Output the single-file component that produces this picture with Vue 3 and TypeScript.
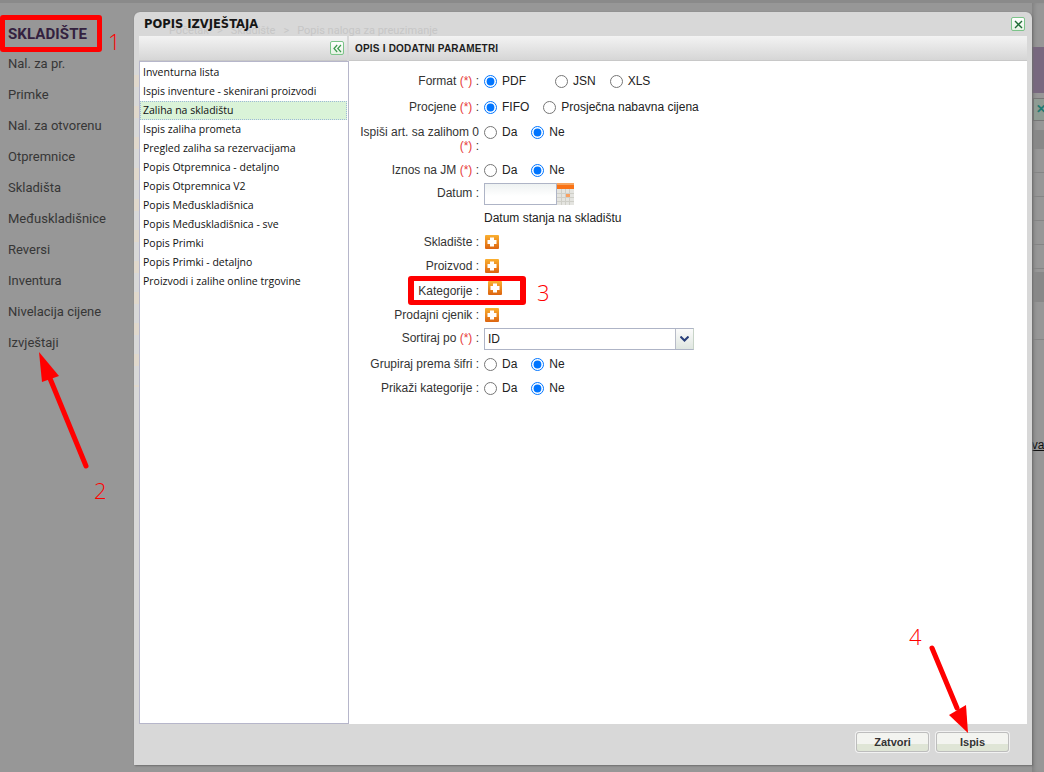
<script setup lang="ts">
import { ref } from 'vue'

type Row = {
  label: string
  req?: boolean
  kind: 'radio' | 'plus' | 'date' | 'help' | 'select'
  name?: string
  options?: string[]
  picked?: string
  h: number
}

const navItems = [
  'Nal. za pr.',
  'Primke',
  'Nal. za otvorenu',
  'Otpremnice',
  'Skladišta',
  'Međuskladišnice',
  'Reversi',
  'Inventura',
  'Nivelacija cijene',
  'Izvještaji',
]

const reports = [
  'Inventurna lista',
  'Ispis inventure - skenirani proizvodi',
  'Zaliha na skladištu',
  'Ispis zaliha prometa',
  'Pregled zaliha sa rezervacijama',
  'Popis Otpremnica - detaljno',
  'Popis Otpremnica V2',
  'Popis Međuskladišnica',
  'Popis Međuskladišnica - sve',
  'Popis Primki',
  'Popis Primki - detaljno',
  'Proizvodi i zalihe online trgovine',
]

const selected = ref('Zaliha na skladištu')

const daNe = ['Da', 'Ne']

const rows: Row[] = [
  { label: 'Format', req: true, kind: 'radio', name: 'format', options: ['PDF', 'JSN', 'XLS'], picked: 'PDF', h: 26 },
  { label: 'Procjene', req: true, kind: 'radio', name: 'proc', options: ['FIFO', 'Prosječna nabavna cijena'], picked: 'FIFO', h: 25 },
  { label: 'Ispiši art. sa zalihom 0', req: true, kind: 'radio', name: 'nula', options: daNe, picked: 'Ne', h: 38 },
  { label: 'Iznos na JM', req: true, kind: 'radio', name: 'jm', options: daNe, picked: 'Ne', h: 23 },
  { label: 'Datum', kind: 'date', h: 26 },
  { label: '', kind: 'help', h: 23 },
  { label: 'Skladište', kind: 'plus', h: 24 },
  { label: 'Proizvod', kind: 'plus', h: 25 },
  { label: 'Kategorije', kind: 'plus', h: 24 },
  { label: 'Prodajni cjenik', kind: 'plus', h: 23 },
  { label: 'Sortiraj po', req: true, kind: 'select', h: 26 },
  { label: 'Grupiraj prema šifri', kind: 'radio', name: 'grup', options: daNe, picked: 'Ne', h: 24 },
  { label: 'Prikaži kategorije', kind: 'radio', name: 'kat', options: daNe, picked: 'Ne', h: 24 },
]
</script>

<template>
  <div class="page">
    <nav class="sidebar">
      <h2 class="side-title">SKLADIŠTE</h2>
      <a v-for="item in navItems" :key="item" class="nav-link">{{ item }}</a>
    </nav>

    <!-- what is left visible of the page behind the dialog -->
    <div class="behind">
      <div class="behind-band"></div>
      <div class="behind-tool"><span>✕</span></div>
      <div class="behind-head"></div>
      <div class="behind-row"></div>
      <div class="behind-row"></div>
      <div class="behind-row"></div>
      <div class="behind-row"></div>
      <div class="behind-row"></div>
      <div class="behind-head tall"></div>
      <div class="behind-row last"></div>
      <a class="behind-link">ava</a>
    </div>

    <section class="dialog">
      <span class="crumbs">
        <span>Početak</span><span>&gt;</span><span>Skladište</span><span>&gt;</span><span>Popis naloga za preuzimanje</span>
      </span>
      <header class="dialog-title">
        <h3>POPIS IZVJEŠTAJA</h3>
        <button class="icon-btn" aria-label="Zatvori">
          <svg width="9" height="9" viewBox="0 0 9 9"><path d="M1 1l7 7M8 1L1 8" stroke="#1f6b35" stroke-width="1.4" /></svg>
        </button>
      </header>

      <div class="panels">
        <aside class="left-panel">
          <div class="panel-head left">
            <button class="icon-btn" aria-label="Sakrij">
              <svg width="9" height="9" viewBox="0 0 9 9"><path d="M4.2 1L1 4.5 4.2 8M8 1L4.8 4.5 8 8" fill="none" stroke="#3c9a4e" stroke-width="1.2" /></svg>
            </button>
          </div>
          <ul class="report-list">
            <li
              v-for="r in reports"
              :key="r"
              class="report"
              :class="{ active: r === selected }"
              @click="selected = r"
            >{{ r }}</li>
          </ul>
        </aside>

        <main class="right-panel">
          <div class="panel-head"><h4>OPIS I DODATNI PARAMETRI</h4></div>
          <form class="params" @submit.prevent>
            <div v-for="row in rows" :key="row.label + row.kind" class="param" :style="{ height: row.h + 'px' }">
              <label class="param-label">
                <template v-if="row.label">
                  {{ row.label }}
                  <span v-if="row.req" class="req">(*)</span>
                  :
                </template>
              </label>
              <div class="param-value">
                <template v-if="row.kind === 'radio'">
                  <label
                    v-for="opt in row.options"
                    :key="opt"
                    class="opt"
                    :class="{ wide: opt === 'PDF' }"
                  >
                    <input type="radio" :name="row.name" :checked="opt === row.picked" />
                    <span>{{ opt }}</span>
                  </label>
                </template>

                <button v-else-if="row.kind === 'plus'" class="plus" :class="{ shifted: row.label === 'Kategorije' }" aria-label="Dodaj">
                  <svg width="14" height="14" viewBox="0 0 14 14">
                    <defs>
                      <linearGradient id="plusFill" x1="0" y1="0" x2="0" y2="1">
                        <stop offset="0" stop-color="#fbb030" />
                        <stop offset="1" stop-color="#dc6410" />
                      </linearGradient>
                    </defs>
                    <rect width="14" height="14" rx="1" fill="url(#plusFill)" />
                    <path d="M5 2.5h4V5h2.5v4H9v2.5H5V9H2.500V5H5z" fill="#fff" />
                  </svg>
                </button>

                <div v-else-if="row.kind === 'date'" class="date-wrap">
                  <input class="date-input" type="text" />
                  <svg class="cal" width="17" height="22" viewBox="0 0 17 22">
                    <rect width="17" height="2" fill="#f7a35c" />
                    <rect y="2" width="17" height="4" fill="#f97316" />
                    <rect y="6" width="17" height="16" fill="#e4e4e0" />
                    <path d="M0 10.5h17M0 14.5h17M0 18.5h17M4.5 6v16M8.5 6v16M12.5 6v16" stroke="#cfcfc8" />
                    <rect x="9" y="11" width="4" height="3" fill="#f9a060" />
                  </svg>
                </div>

                <span v-else-if="row.kind === 'help'" class="help">Datum stanja na skladištu</span>

                <div v-else-if="row.kind === 'select'" class="select">
                  <span class="select-text">ID</span>
                  <span class="select-arrow">
                    <svg width="9" height="6" viewBox="0 0 9 6"><path d="M0.5 0.5L4.5 4.5 8.5 0.5" fill="none" stroke="#2a3f7a" stroke-width="2" /></svg>
                  </span>
                </div>
              </div>
            </div>
          </form>
        </main>
      </div>

      <footer class="dialog-foot">
        <button class="btn">Zatvori</button>
        <button class="btn">Ispis</button>
      </footer>
    </section>

    <!-- red markings drawn over the screenshot -->
    <div class="mark mark-title"></div>
    <div class="mark mark-kat"></div>
    <span class="num n1">1</span>
    <span class="num n2">2</span>
    <span class="num n3">3</span>
    <span class="num n4">4</span>
    <svg class="arrows" width="1044" height="772" viewBox="0 0 1044 772">
      <path d="M86 466L49 376" stroke="#f00" stroke-width="5" stroke-linecap="round" />
      <path d="M39 352L42 382L59 376Z" fill="#f00" />
      <path d="M932 648L957 708" stroke="#f00" stroke-width="5" stroke-linecap="round" />
      <path d="M968 733L949 715L966 705Z" fill="#f00" />
    </svg>
  </div>
</template>

<style>
html,
body {
  margin: 0;
  background: #979797;
}
</style>

<style scoped>
.page {
  position: relative;
  width: 1044px;
  height: 772px;
  overflow: hidden;
  background: #979797;
  border-top: 3px solid #8a8a8a;
  box-sizing: border-box;
  font-family: 'Liberation Sans', Arial, sans-serif;
  color: #2e2e2e;
}

.sidebar {
  display: flex;
  flex-direction: column;
  width: 133px;
  padding: 20px 0 0 8px;
  box-sizing: border-box;
  font-family: Roboto, sans-serif;
}

.side-title {
  margin: 0 0 2px;
  height: 23px;
  line-height: 23px;
  font-size: 15px;
  font-weight: 700;
  letter-spacing: 0.1px;
  color: #33213f;
}

.nav-link {
  height: 31px;
  line-height: 31px;
  font-size: 13px;
  color: #363636;
  white-space: nowrap;
}

.behind {
  position: absolute;
  left: 1032px;
  top: 0;
  width: 12px;
  height: 769px;
  box-shadow: inset 4px 0 4px -2px #808080;
}

.behind-band {
  position: absolute;
  top: 44px;
  left: 0;
  right: 0;
  height: 46px;
  background: #78687f;
}

.behind-tool {
  position: absolute;
  top: 95px;
  left: 1px;
  width: 20px;
  height: 21px;
  border: 1px solid #777;
  background: #8f9c94;
  color: #1d7a72;
  font-size: 12px;
  font-weight: 700;
  line-height: 21px;
  text-indent: 2px;
}

.behind-head {
  position: absolute;
  top: 127px;
  left: 0;
  right: 0;
  height: 19px;
  background: #888;
}

.behind-head.tall {
  top: 269px;
  height: 30px;
}

.behind-row {
  position: absolute;
  left: 0;
  right: 0;
  height: 1px;
  background: #858585;
}

.behind-row:nth-of-type(4) { top: 169px; }
.behind-row:nth-of-type(5) { top: 193px; }
.behind-row:nth-of-type(6) { top: 217px; }
.behind-row:nth-of-type(7) { top: 241px; }
.behind-row:nth-of-type(8) { top: 265px; }
.behind-row.last { top: 336px; }

.behind-link {
  position: absolute;
  top: 435px;
  left: -7px;
  font-size: 12px;
  line-height: 14px;
  color: #111;
  text-decoration: underline;
}

.dialog {
  position: absolute;
  left: 134px;
  top: 9px;
  width: 898px;
  height: 753px;
  display: flex;
  flex-direction: column;
  box-sizing: border-box;
  padding: 0 5px;
  background:
    repeating-linear-gradient(#d8d8d8 0 18px, #e0d8cc 18px 30px, #d8d8d8 30px 31px) left 45px / 5px 330px no-repeat,
    #d8d8d8;
  border-radius: 6px 6px 0 0;
  box-shadow: 1px 1px 2px #6e6e6e, 0 0 1px #777;
}

.crumbs {
  position: absolute;
  left: 35px;
  top: 12px;
  display: flex;
  font-family: Roboto, sans-serif;
  font-size: 11px;
  line-height: 14px;
  color: #c6c6c6;
  white-space: nowrap;
}

.crumbs span + span {
  margin-left: 8px;
}

.dialog-title {
  position: relative;
  display: flex;
  align-items: center;
  justify-content: space-between;
  height: 24px;
  padding: 0 2px 0 5px;
  flex: none;
}

.dialog-title h3 {
  margin: 0;
  font-family: 'DejaVu Sans', sans-serif;
  font-size: 11.5px;
  font-weight: 700;
  color: #161616;
}

.icon-btn {
  width: 14px;
  height: 14px;
  padding: 0;
  display: flex;
  align-items: center;
  justify-content: center;
  box-sizing: border-box;
  background: linear-gradient(#ffffff, #e6f3e4);
  border: 1px solid #7cc48a;
  border-radius: 2px;
}

.panels {
  flex: 1;
  display: flex;
  gap: 0;
  min-height: 0;
}

.left-panel {
  width: 210px;
  display: flex;
  flex-direction: column;
  flex: none;
}

.panel-head {
  height: 25px;
  flex: none;
  display: flex;
  align-items: center;
  padding: 0 6px;
  background: linear-gradient(#f3f3f3, #d6d6d6);
  border-bottom: 1px solid #c8c8c8;
  box-sizing: border-box;
}

.panel-head.left {
  justify-content: flex-end;
  padding-right: 3px;
  margin-right: 2px;
}

.panel-head h4 {
  margin: 0;
  font-size: 10px;
  font-weight: 700;
  letter-spacing: 0.2px;
  color: #1d1d1d;
}

.report-list {
  flex: 1;
  margin: 0;
  padding: 1px 0 0;
  list-style: none;
  background: #fff;
  border: 1px solid #b6b6ca;
  box-sizing: border-box;
}

.report {
  height: 19px;
  line-height: 19px;
  padding: 0 3px;
  margin-right: 1px;
  font-family: 'Open Sans', sans-serif;
  font-size: 10.5px;
  color: #111;
  white-space: nowrap;
  box-sizing: border-box;
}

.report.active {
  line-height: 17px;
  background: #daf3d8;
  border: 1px dotted #9db8d8;
  padding: 0 2px;
}

.right-panel {
  flex: 1;
  display: flex;
  flex-direction: column;
  min-width: 0;
  background: #fff;
}

.params {
  padding-top: 8px;
  font-size: 12px;
}

.param {
  display: flex;
  align-items: flex-start;
}

.param-label {
  width: 130px;
  flex: none;
  text-align: right;
  line-height: 14px;
  padding-top: 5px;
  color: #333;
  white-space: normal;
}

.req {
  color: #e63a3a;
}

.param-value {
  display: flex;
  align-items: flex-start;
  margin-left: 5px;
  padding-top: 5px;
  min-height: 14px;
}

.opt {
  display: flex;
  align-items: center;
  height: 14px;
  margin-right: 14px;
  color: #222;
  white-space: nowrap;
}

.opt.wide {
  margin-right: 29px;
}

.opt input {
  width: 13px;
  height: 13px;
  margin: 0 5px 0 0;
  accent-color: #0075ff;
}

.plus {
  padding: 0;
  border: 0;
  background: none;
  height: 14px;
  display: block;
  margin: 0 0 0 1px;
}

.plus.shifted {
  margin: -3px 0 0 4px;
}

.date-wrap {
  display: flex;
  margin-top: -3px;
}

.date-input {
  width: 73px;
  height: 22px;
  padding: 0;
  box-sizing: border-box;
  border: 1px solid #aeb4c6;
  background: linear-gradient(#eef2f2, #fff 60%);
  outline: none;
}

.help {
  color: #222;
  margin-top: -1px;
}

.select {
  width: 210px;
  height: 22px;
  display: flex;
  margin-top: -3px;
  box-sizing: border-box;
  border: 1px solid #aeb4c6;
  border-right-color: #c8d4c8;
}

.select-text {
  flex: 1;
  padding-left: 3px;
  line-height: 20px;
  color: #222;
}

.select-arrow {
  width: 17px;
  display: flex;
  align-items: center;
  justify-content: center;
  border-left: 1px solid #b8bcc8;
  background: linear-gradient(#fbfbfb, #dfe6e0);
}

.dialog-foot {
  flex: none;
  height: 41px;
  display: flex;
  justify-content: flex-end;
  align-items: flex-start;
  gap: 7px;
  padding: 8px 18px 0 0;
  box-sizing: border-box;
}

.btn {
  width: 73px;
  height: 20px;
  padding: 0;
  border: 1px solid #bdbdbd;
  border-radius: 3px;
  background: linear-gradient(#f3f4f0 0 62%, #dfe5d6 62%);
  box-shadow: 0 0 0 1px #f2f2f2;
  font-family: 'Liberation Sans', Arial, sans-serif;
  font-size: 11px;
  font-weight: 700;
  color: #333;
}

.mark {
  position: absolute;
  box-sizing: border-box;
  border: 5px solid #f00;
  border-radius: 3px;
}

.mark-title {
  left: 0;
  top: 12px;
  width: 102px;
  height: 37px;
}

.mark-kat {
  left: 408px;
  top: 273px;
  width: 118px;
  height: 29px;
  border-width: 5px 6px;
}

.num {
  position: absolute;
  font-family: 'Open Sans', sans-serif;
  font-size: 22px;
  font-weight: 300;
  line-height: 24px;
  color: #f00;
}

.n1 { left: 108px; top: 26px; }
.n2 { left: 94px; top: 475px; }
.n3 { left: 537px; top: 277px; }
.n4 { left: 909px; top: 621px; }

.arrows {
  position: absolute;
  left: 0;
  top: -3px;
  pointer-events: none;
}
</style>
